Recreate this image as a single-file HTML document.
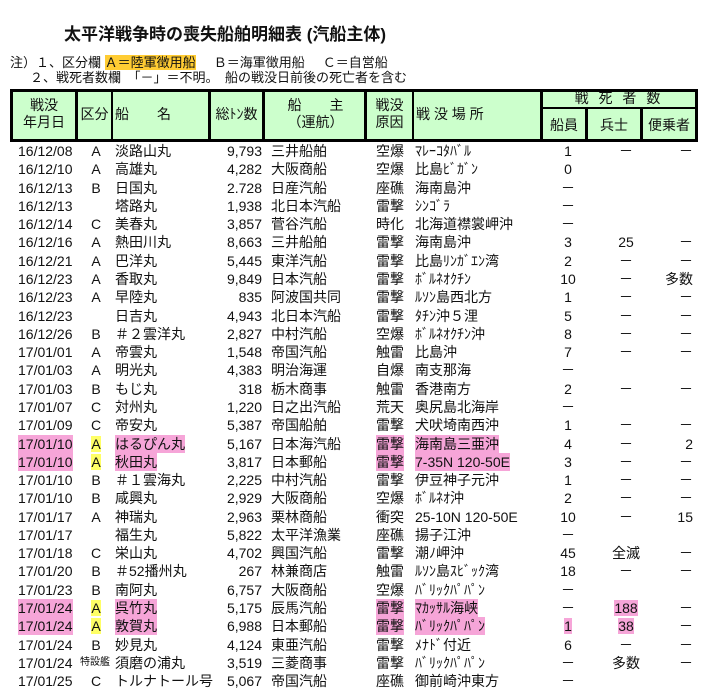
<!DOCTYPE html>
<html><head><meta charset="utf-8"><style>
body{margin:0;background:#fff;width:705px;height:683px;overflow:hidden;position:relative;font-family:"Liberation Sans","Noto Sans CJK JP",sans-serif;color:#111}
.t{position:absolute;white-space:nowrap}
.hd{position:absolute;background:#ccffcc}
.ln{position:absolute;background:#000}
.r{position:absolute;left:0;width:705px;height:18px;font-size:14px;line-height:18px}
.r span{position:absolute;white-space:nowrap}
.c0{left:18px}.c1{left:88px;width:16px;text-align:center}.c2{left:115px}.c3{right:443px}.c4{left:271px}.c5{left:376px}.c6{left:415px}
.c7{left:550px;width:36px;text-align:center}.c8{left:600px;width:52px;text-align:center}.c9{right:12px}
.p{background:#f6a5d8}.y{background:#ffff66}
.h{font-size:14px;text-align:center;line-height:17px}
</style></head><body>
<div class="t" style="left:64px;top:20px;font-size:17px;font-weight:bold">太平洋戦争時の喪失船舶明細表 (汽船主体)</div>
<div class="t" style="left:10px;top:52px;font-size:13px">注）１、区分欄 <span style="background:#ffcc33">Ａ＝陸軍徴用船</span> &nbsp;&nbsp;&nbsp;&nbsp;Ｂ＝海軍徴用船 &nbsp;&nbsp;&nbsp;&nbsp;Ｃ＝自営船</div>
<div class="t" style="left:30px;top:67px;font-size:13px">２、戦死者数欄　「－」＝不明。　船の戦没日前後の死亡者を含む</div>

<div class="hd" style="left:11px;top:89px;width:686px;height:52px"></div>
<div class="ln" style="left:10px;top:89px;width:688px;height:3px"></div>
<div class="ln" style="left:10px;top:139px;width:688px;height:3px"></div>
<div class="ln" style="left:540px;top:107px;width:158px;height:2px"></div>
<div class="ln" style="left:10px;top:89px;width:3px;height:53px"></div>
<div class="ln" style="left:75px;top:89px;width:3px;height:53px"></div>
<div class="ln" style="left:111px;top:89px;width:2px;height:53px"></div>
<div class="ln" style="left:208px;top:89px;width:3px;height:53px"></div>
<div class="ln" style="left:262px;top:89px;width:3px;height:53px"></div>
<div class="ln" style="left:364px;top:89px;width:3px;height:53px"></div>
<div class="ln" style="left:412px;top:89px;width:2px;height:53px"></div>
<div class="ln" style="left:540px;top:89px;width:3px;height:53px"></div>
<div class="ln" style="left:585px;top:107px;width:3px;height:35px"></div>
<div class="ln" style="left:640px;top:107px;width:3px;height:35px"></div>
<div class="ln" style="left:695px;top:89px;width:3px;height:53px"></div>

<div class="t h" style="left:13px;top:97px;width:62px">戦没<br>年月日</div>
<div class="t h" style="left:78px;top:106px;width:33px">区分</div>
<div class="t h" style="left:115px;top:106px">船　　名</div>
<div class="t h" style="left:211px;top:106px;width:51px">総ﾄﾝ数</div>
<div class="t h" style="left:267px;top:97px;width:97px">船　　主<br>（運航）</div>
<div class="t h" style="left:367px;top:97px;width:45px">戦没<br>原因</div>
<div class="t h" style="left:416px;top:106px">戦 没 場 所</div>
<div class="t h" style="left:543px;top:90px;width:152px;letter-spacing:3px">戦 死 者 数</div>
<div class="t h" style="left:543px;top:117px;width:42px">船員</div>
<div class="t h" style="left:588px;top:117px;width:52px">兵士</div>
<div class="t h" style="left:643px;top:117px;width:52px">便乗者</div>

<div class="r" style="top:142px"><span class="c0">16/12/08</span><span class="c1">A</span><span class="c2">淡路山丸</span><span class="c3">9,793</span><span class="c4">三井船舶</span><span class="c5">空爆</span><span class="c6">ﾏﾚｰｺﾀﾊﾞﾙ</span><span class="c7">1</span><span class="c8">－</span><span class="c9">－</span></div>
<div class="r" style="top:160.3px"><span class="c0">16/12/10</span><span class="c1">A</span><span class="c2">高雄丸</span><span class="c3">4,282</span><span class="c4">大阪商船</span><span class="c5">空爆</span><span class="c6">比島ﾋﾞｶﾞﾝ</span><span class="c7">0</span></div>
<div class="r" style="top:178.6px"><span class="c0">16/12/13</span><span class="c1">B</span><span class="c2">日国丸</span><span class="c3">2.728</span><span class="c4">日産汽船</span><span class="c5">座礁</span><span class="c6">海南島沖</span><span class="c7">－</span></div>
<div class="r" style="top:196.8px"><span class="c0">16/12/13</span><span class="c2">塔路丸</span><span class="c3">1,938</span><span class="c4">北日本汽船</span><span class="c5">雷撃</span><span class="c6">ｼﾝｺﾞﾗ</span><span class="c7">－</span></div>
<div class="r" style="top:215.1px"><span class="c0">16/12/14</span><span class="c1">C</span><span class="c2">美春丸</span><span class="c3">3,857</span><span class="c4">菅谷汽船</span><span class="c5">時化</span><span class="c6">北海道襟裳岬沖</span><span class="c7">－</span></div>
<div class="r" style="top:233.4px"><span class="c0">16/12/16</span><span class="c1">A</span><span class="c2">熱田川丸</span><span class="c3">8,663</span><span class="c4">三井船舶</span><span class="c5">雷撃</span><span class="c6">海南島沖</span><span class="c7">3</span><span class="c8">25</span><span class="c9">－</span></div>
<div class="r" style="top:251.7px"><span class="c0">16/12/21</span><span class="c1">A</span><span class="c2">巴洋丸</span><span class="c3">5,445</span><span class="c4">東洋汽船</span><span class="c5">雷撃</span><span class="c6">比島ﾘﾝｶﾞｴﾝ湾</span><span class="c7">2</span><span class="c8">－</span><span class="c9">－</span></div>
<div class="r" style="top:270px"><span class="c0">16/12/23</span><span class="c1">A</span><span class="c2">香取丸</span><span class="c3">9,849</span><span class="c4">日本汽船</span><span class="c5">雷撃</span><span class="c6">ﾎﾞﾙﾈｵｸﾁﾝ</span><span class="c7">10</span><span class="c8">－</span><span class="c9">多数</span></div>
<div class="r" style="top:288.2px"><span class="c0">16/12/23</span><span class="c1">A</span><span class="c2">早陸丸</span><span class="c3">835</span><span class="c4">阿波国共同</span><span class="c5">雷撃</span><span class="c6">ﾙｿﾝ島西北方</span><span class="c7">1</span><span class="c8">－</span><span class="c9">－</span></div>
<div class="r" style="top:306.5px"><span class="c0">16/12/23</span><span class="c2">日吉丸</span><span class="c3">4,943</span><span class="c4">北日本汽船</span><span class="c5">雷撃</span><span class="c6">ﾀﾁﾝ沖５浬</span><span class="c7">5</span><span class="c8">－</span><span class="c9">－</span></div>
<div class="r" style="top:324.8px"><span class="c0">16/12/26</span><span class="c1">B</span><span class="c2">＃２雲洋丸</span><span class="c3">2,827</span><span class="c4">中村汽船</span><span class="c5">空爆</span><span class="c6">ﾎﾞﾙﾈｵｸﾁﾝ沖</span><span class="c7">8</span><span class="c8">－</span><span class="c9">－</span></div>
<div class="r" style="top:343.1px"><span class="c0">17/01/01</span><span class="c1">A</span><span class="c2">帝雲丸</span><span class="c3">1,548</span><span class="c4">帝国汽船</span><span class="c5">触雷</span><span class="c6">比島沖</span><span class="c7">7</span><span class="c8">－</span><span class="c9">－</span></div>
<div class="r" style="top:361.4px"><span class="c0">17/01/03</span><span class="c1">A</span><span class="c2">明光丸</span><span class="c3">4,383</span><span class="c4">明治海運</span><span class="c5">自爆</span><span class="c6">南支那海</span><span class="c7">－</span></div>
<div class="r" style="top:379.6px"><span class="c0">17/01/03</span><span class="c1">B</span><span class="c2">もじ丸</span><span class="c3">318</span><span class="c4">栃木商事</span><span class="c5">触雷</span><span class="c6">香港南方</span><span class="c7">2</span><span class="c8">－</span><span class="c9">－</span></div>
<div class="r" style="top:397.9px"><span class="c0">17/01/07</span><span class="c1">C</span><span class="c2">対州丸</span><span class="c3">1,220</span><span class="c4">日之出汽船</span><span class="c5">荒天</span><span class="c6">奥尻島北海岸</span><span class="c7">－</span></div>
<div class="r" style="top:416.2px"><span class="c0">17/01/09</span><span class="c1">C</span><span class="c2">帝安丸</span><span class="c3">5,387</span><span class="c4">帝国船舶</span><span class="c5">雷撃</span><span class="c6">犬吠埼南西沖</span><span class="c7">1</span><span class="c8">－</span><span class="c9">－</span></div>
<div class="r" style="top:434.5px"><span class="c0 p">17/01/10</span><span class="c1"><i class="y" style="font-style:normal">A</i></span><span class="c2 p">はるぴん丸</span><span class="c3">5,167</span><span class="c4">日本海汽船</span><span class="c5 p">雷撃</span><span class="c6 p">海南島三亜沖</span><span class="c7">4</span><span class="c8">－</span><span class="c9">2</span></div>
<div class="r" style="top:452.8px"><span class="c0 p">17/01/10</span><span class="c1"><i class="y" style="font-style:normal">A</i></span><span class="c2 p">秋田丸</span><span class="c3">3,817</span><span class="c4">日本郵船</span><span class="c5 p">雷撃</span><span class="c6 p">7-35N 120-50E</span><span class="c7">3</span><span class="c8">－</span><span class="c9">－</span></div>
<div class="r" style="top:471px"><span class="c0">17/01/10</span><span class="c1">B</span><span class="c2">＃１雲海丸</span><span class="c3">2,225</span><span class="c4">中村汽船</span><span class="c5">雷撃</span><span class="c6">伊豆神子元沖</span><span class="c7">1</span><span class="c8">－</span><span class="c9">－</span></div>
<div class="r" style="top:489.3px"><span class="c0">17/01/10</span><span class="c1">B</span><span class="c2">咸興丸</span><span class="c3">2,929</span><span class="c4">大阪商船</span><span class="c5">空爆</span><span class="c6">ﾎﾞﾙﾈｵ沖</span><span class="c7">2</span><span class="c8">－</span><span class="c9">－</span></div>
<div class="r" style="top:507.6px"><span class="c0">17/01/17</span><span class="c1">A</span><span class="c2">神瑞丸</span><span class="c3">2,963</span><span class="c4">栗林商船</span><span class="c5">衝突</span><span class="c6">25-10N 120-50E</span><span class="c7">10</span><span class="c8">－</span><span class="c9">15</span></div>
<div class="r" style="top:525.9px"><span class="c0">17/01/17</span><span class="c2">福生丸</span><span class="c3">5,822</span><span class="c4">太平洋漁業</span><span class="c5">座礁</span><span class="c6">揚子江沖</span><span class="c7">－</span></div>
<div class="r" style="top:544.2px"><span class="c0">17/01/18</span><span class="c1">C</span><span class="c2">栄山丸</span><span class="c3">4,702</span><span class="c4">興国汽船</span><span class="c5">雷撃</span><span class="c6">潮ﾉ岬沖</span><span class="c7">45</span><span class="c8">全滅</span><span class="c9">－</span></div>
<div class="r" style="top:562.4px"><span class="c0">17/01/20</span><span class="c1">B</span><span class="c2">＃52播州丸</span><span class="c3">267</span><span class="c4">林兼商店</span><span class="c5">触雷</span><span class="c6">ﾙｿﾝ島ｽﾋﾞｯｸ湾</span><span class="c7">18</span><span class="c8">－</span><span class="c9">－</span></div>
<div class="r" style="top:580.7px"><span class="c0">17/01/23</span><span class="c1">B</span><span class="c2">南阿丸</span><span class="c3">6,757</span><span class="c4">大阪商船</span><span class="c5">空爆</span><span class="c6">ﾊﾞﾘｯｸﾊﾟﾊﾟﾝ</span><span class="c7">－</span></div>
<div class="r" style="top:599px"><span class="c0 p">17/01/24</span><span class="c1"><i class="y" style="font-style:normal">A</i></span><span class="c2 p">呉竹丸</span><span class="c3">5,175</span><span class="c4">辰馬汽船</span><span class="c5 p">雷撃</span><span class="c6 p">ﾏｶｯｻﾙ海峡</span><span class="c7">－</span><span class="c8"><i class="p" style="font-style:normal">188</i></span><span class="c9">－</span></div>
<div class="r" style="top:617.3px"><span class="c0 p">17/01/24</span><span class="c1"><i class="y" style="font-style:normal">A</i></span><span class="c2 p">敦賀丸</span><span class="c3">6,988</span><span class="c4">日本郵船</span><span class="c5 p">雷撃</span><span class="c6 p">ﾊﾞﾘｯｸﾊﾟﾊﾟﾝ</span><span class="c7"><i class="p" style="font-style:normal">1</i></span><span class="c8"><i class="p" style="font-style:normal">38</i></span><span class="c9">－</span></div>
<div class="r" style="top:635.6px"><span class="c0">17/01/24</span><span class="c1">B</span><span class="c2">妙見丸</span><span class="c3">4,124</span><span class="c4">東亜汽船</span><span class="c5">雷撃</span><span class="c6">ﾒﾅﾄﾞ付近</span><span class="c7">6</span><span class="c8">－</span><span class="c9">－</span></div>
<div class="r" style="top:653.8px"><span class="c0">17/01/24</span><span style="left:80px;font-size:10px">特設艦</span><span class="c2">須磨の浦丸</span><span class="c3">3,519</span><span class="c4">三菱商事</span><span class="c5">雷撃</span><span class="c6">ﾊﾞﾘｯｸﾊﾟﾊﾟﾝ</span><span class="c7">－</span><span class="c8">多数</span><span class="c9">－</span></div>
<div class="r" style="top:672.1px"><span class="c0">17/01/25</span><span class="c1">C</span><span class="c2">トルナトール号</span><span class="c3">5,067</span><span class="c4">帝国汽船</span><span class="c5">座礁</span><span class="c6">御前崎沖東方</span><span class="c7">－</span></div>
</body></html>
